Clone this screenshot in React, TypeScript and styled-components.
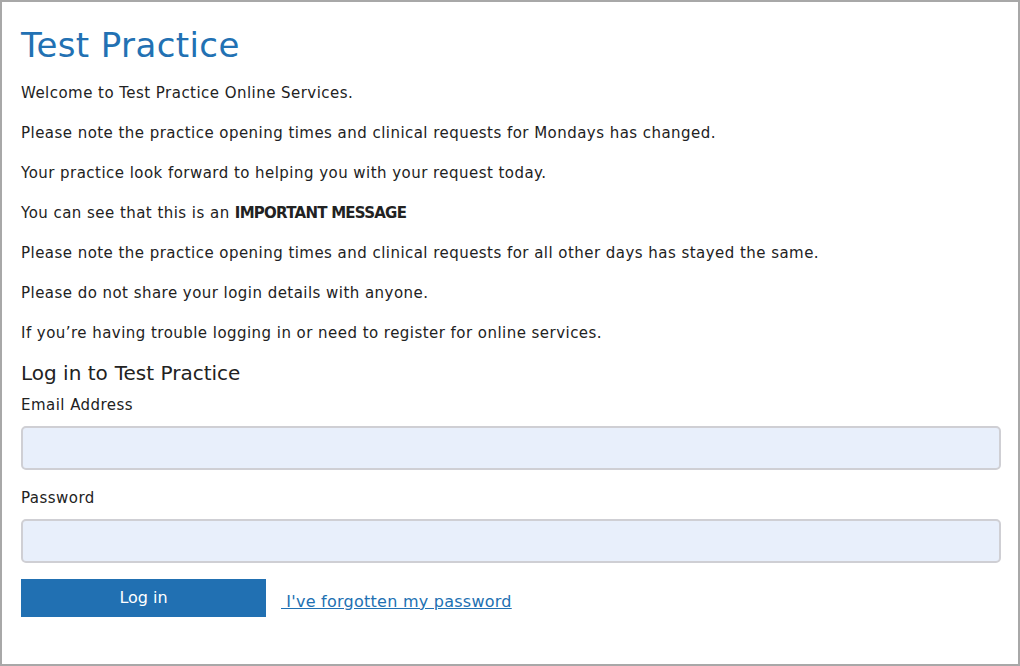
import React from "react";
import styled, { createGlobalStyle } from "styled-components";

const Global = createGlobalStyle`
  html, body { margin: 0; padding: 0; background: #ffffff; }
  * { box-sizing: border-box; }
  body { font-family: "DejaVu Sans", "Open Sans", sans-serif; color: #222222; }
`;

const Frame = styled.div`
  width: 1020px;
  height: 666px;
  border: 2px solid #a8a8a8;
  padding: 23px 17px 0 19px;
  display: flex;
  flex-direction: column;
`;

const Title = styled.h1`
  margin: 0 0 16px;
  font-size: 34px;
  line-height: 40px;
  font-weight: 500;
  letter-spacing: 0.4px;
  color: #2271b3;
`;

const Messages = styled.div`
  display: flex;
  flex-direction: column;
  gap: 16px;
  margin-bottom: 14px;
`;

const Para = styled.p`
  margin: 0;
  font-size: 15px;
  line-height: 24px;
  letter-spacing: 0.46px;
  & strong {
    letter-spacing: -0.75px;
  }
`;

const Heading = styled.h2`
  margin: 0 0 6px;
  font-size: 20px;
  line-height: 28px;
  font-weight: 500;
  color: #222222;
  & span { margin-left: 7px; }
`;

const Label = styled.label`
  display: block;
  font-size: 15px;
  line-height: 24px;
  letter-spacing: 0.46px;
  margin-bottom: 9px;
`;

const Input = styled.input`
  display: block;
  width: 100%;
  height: 44px;
  border: 2px solid #cfcfd4;
  border-radius: 5px;
  background: #e8effb;
  margin-bottom: 16px;
`;

const Actions = styled.div`
  display: flex;
  align-items: center;
  gap: 15px;
`;

const Button = styled.button`
  width: 245px;
  height: 38px;
  border: none;
  background: #2170b2;
  color: #ffffff;
  font-family: inherit;
  font-size: 16px;
  font-weight: 500;
  padding: 0 0 2px;
`;

const Link = styled.a`
  color: #2170b2;
  font-size: 16px;
  letter-spacing: 0.25px;
  text-decoration: underline;
  margin-top: 6px;
`;

export default function App() {
  return (
    <>
      <Global />
      <Frame>
        <Title>Test Practice</Title>
        <Messages>
          <Para>Welcome to Test Practice Online Services.</Para>
          <Para>Please note the practice opening times and clinical requests for Mondays has changed.</Para>
          <Para>Your practice look forward to helping you with your request today.</Para>
          <Para>
            You can see that this is an <strong>IMPORTANT MESSAGE</strong>
          </Para>
          <Para>Please note the practice opening times and clinical requests for all other days has stayed the same.</Para>
          <Para>Please do not share your login details with anyone.</Para>
          <Para>If you’re having trouble logging in or need to register for online services.</Para>
        </Messages>
        <Heading>
          Log in to<span>Test Practice</span>
        </Heading>
        <Label htmlFor="email">Email Address</Label>
        <Input id="email" type="email" />
        <Label htmlFor="password">Password</Label>
        <Input id="password" type="password" />
        <Actions>
          <Button type="button">Log in</Button>
          <Link href="#">{"\u00a0I've forgotten my password"}</Link>
        </Actions>
      </Frame>
    </>
  );
}
